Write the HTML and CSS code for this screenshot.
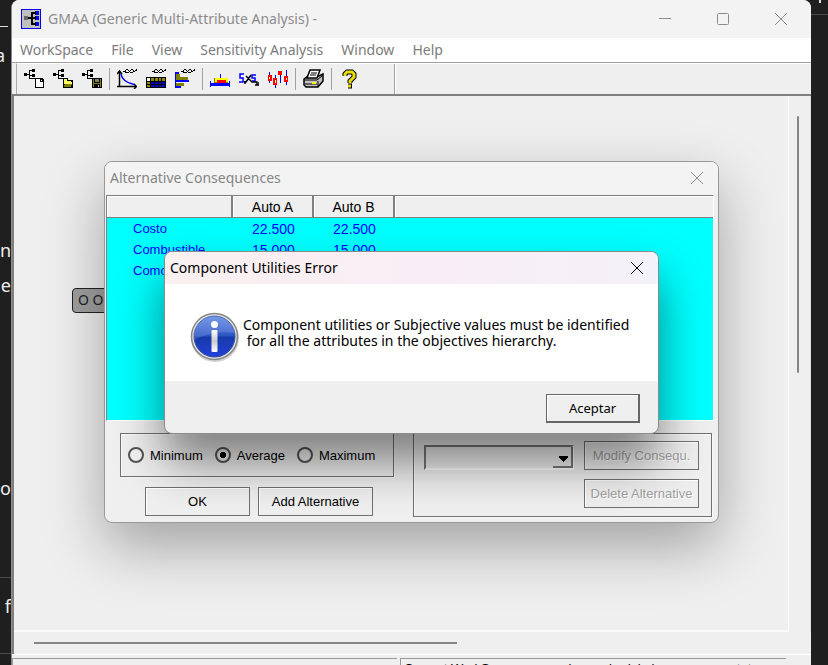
FILE: index.html
```html
<!DOCTYPE html>
<html lang="en">
<head>
<meta charset="utf-8">
<title>GMAA (Generic Multi-Attribute Analysis)</title>
<link rel="stylesheet" href="styles.css">
</head>
<body>
<div class="desktop">
  <div class="behind behind-left">
    <i class="rule rule-dash"></i>
    <span class="frag f1">a</span>
    <span class="frag f2">n</span>
    <span class="frag f3">ie</span>
    <span class="frag f4">o</span>
    <i class="rule rule-low"></i>
    <span class="frag f5">f</span>
    <i class="rule rule-end"></i>
  </div>
  <div class="behind behind-right"><i class="stub"></i><i class="rule rule-top"></i></div>

  <main class="app">
    <header class="titlebar">
      <svg class="logo" width="20" height="20" viewBox="0 0 20 20" shape-rendering="crispEdges">
        <path fill="#0000f0" d="M0 0h20v20H0z"/>
        <path fill="#c0c0c0" d="M1 1h18v18H1z"/>
        <path fill="#666" d="M3 7h4v4H3z"/>
        <path d="M7 8h4v2H7zM10 3h2v13h-2zM12 3h2v2h-2zM12 8h2v2h-2zM12 14h2v2h-2z"/>
        <path fill="#0000f0" d="M15 2h3v4h-3zM15 7h3v4h-3zM15 13h3v4h-3z"/>
        <path d="M14 2h1v4h-1zM14 7h1v4h-1zM14 13h1v4h-1z"/>
      </svg>
      <h1>GMAA (Generic Multi-Attribute Analysis) -</h1>
      <div class="winbtns">
        <button type="button" aria-label="Minimize"><svg width="14" height="14" viewBox="0 0 14 14"><path d="M1 6.500h12"/></svg></button>
        <button type="button" aria-label="Maximize"><svg width="14" height="14" viewBox="0 0 14 14"><rect x="1.500" y="1.500" width="11" height="11" rx="1"/></svg></button>
        <button type="button" aria-label="Close"><svg width="14" height="14" viewBox="0 0 14 14"><path d="M1 1l12 12M13 1L1 13"/></svg></button>
      </div>
    </header>
    <nav class="menu">
      <a href="#">WorkSpace</a><a href="#">File</a><a href="#">View</a><a href="#">Sensitivity Analysis</a><a href="#">Window</a><a href="#">Help</a>
    </nav>
    <svg class="defs" width="0" height="0" aria-hidden="true">
      <defs>
        <path id="tree" d="M0 4h3v3H0zM3 5h2v1H3zM5 1h1v9H5zM6 1h2v1H6zM8 0h3v3H8zM6 6h2v1H6zM8 5h3v3H8zM6 9h5v1H6z"/>
        <path id="wave" d="M6 2h2V1h1v3H8V3H6zM9 0h2v1H9zM11 1h1v1h-1zM9 3h3v1H9zM12 2h1v1h-1zM13 1h1v1h-1zM14 0h2v1h-2zM13 3h1v1h-1zM14 3h2v1h-2zM16 1h1v2h-1zM17 2h1v1h-1zM18 1h1v1h-1zM19 0h1v2h-1z"/>
      </defs>
    </svg>
    <div class="toolbar">
      <div class="group">
        <button type="button" aria-label="New workspace"><svg width="20" height="20" viewBox="0 0 20 20" shape-rendering="crispEdges"><use href="#tree"/><path d="M11 9h7l2 2v8h-9z"/><path fill="#fff" d="M12 10h4v3h3v5h-7zM17 11h1v1h-1z"/></svg></button>
        <button type="button" aria-label="Open workspace"><svg width="20" height="20" viewBox="0 0 20 20" shape-rendering="crispEdges"><use href="#tree"/><path d="M10 9h5v2h5v8H10z"/><path fill="#ffff60" d="M11 10h3v2h4v1h-7z"/><path fill="#808000" d="M12 15h7l-1 3h-7z"/><path fill="#ffff60" d="M11 13h8v2h-8z"/></svg></button>
        <button type="button" aria-label="Save workspace"><svg width="20" height="20" viewBox="0 0 20 20" shape-rendering="crispEdges"><use href="#tree"/><path d="M10 9h10v10H10z"/><path fill="#808000" d="M11 10h1v8h-1zM18 10h1v8h-1zM11 14h8v1h-8z"/><path fill="#808060" d="M13 10h4v3h-4z"/><path fill="#c0c0c0" d="M16 16h1v2h-1z"/></svg></button>
      </div>
      <div class="group">
        <button type="button" aria-label="Utilities"><svg width="20" height="20" viewBox="0 0 20 20"><use href="#wave"/><path fill="none" stroke="#000" stroke-width="1.500" d="M2.500 18V3M0 17.500h20M0 5l2.500-3L5 5M17 15l2.500 2.500L17 20"/><path fill="none" stroke="#00f" stroke-width="1.500" d="M4 5c1 6 6 9 13 10.500"/></svg></button>
        <button type="button" aria-label="Consequence table"><svg width="20" height="20" viewBox="0 0 20 20" shape-rendering="crispEdges"><use href="#wave"/><path d="M0 8h20v11H0z"/><path fill="#fff" d="M1 9h3v3H1z"/><path fill="#908800" d="M5 9h3v3H5zM9 9h3v3H9zM13 9h2v3h-2zM16 9h3v3h-3zM1 13h3v2H1zM1 16h3v2H1z"/><path fill="#0000c8" d="M5 13h3v2H5zM9 13h3v2H9zM13 13h2v2h-2zM16 13h3v2h-3zM5 16h3v2H5zM9 16h3v2H9zM13 16h2v2h-2zM16 16h3v2h-3z"/></svg></button>
        <button type="button" aria-label="Ranking"><svg width="20" height="20" viewBox="0 0 20 20" shape-rendering="crispEdges"><use href="#wave"/><path fill="#808000" d="M1 5h4v3H1zM1 8h12v3H1zM1 14h8v3H1z"/><path fill="#00f" d="M0 3h1v16H0zM1 3h3v2H1zM1 11h13v2H1zM1 17h5v2H1z"/></svg></button>
      </div>
      <div class="group">
        <button type="button" aria-label="Weight stability"><svg width="20" height="20" viewBox="0 0 20 20" shape-rendering="crispEdges"><path fill="#00f" d="M10 5h1v5h-1zM0 12h1v6H0zM19 12h1v6h-1zM0 14h20v3H0z"/><path fill="#808000" d="M4 9h14v5H4z"/><path fill="#ff0" d="M5 9h13v4H5z"/><path fill="#f00" d="M7 11h9v3H7z"/></svg></button>
        <button type="button" aria-label="Dominance"><svg width="20" height="20" viewBox="0 0 20 20"><path fill="none" stroke="#00f" stroke-width="1.500" d="M5 5H1v4h3v4H0M17 6h-4v3h3v3h-3"/><path fill="none" stroke="#000" stroke-width="1.500" d="M5 13h2l5-7M7 7l6 6h5v3M6 15v-3M16 16h4v-3"/></svg></button>
        <button type="button" aria-label="Simulation"><svg width="20" height="20" viewBox="0 0 20 20" shape-rendering="crispEdges"><path fill="#00f" d="M1 3h1v11H1zM7 6h1v13H7zM12 3h1v11h-1zM18 1h1v15h-1z"/><path fill="#f00" d="M0 6h4v6H0zM5 9h4v7H5zM10 2h4v4h-4zM16 7h4v6h-4z"/><path fill="#ff9" d="M1 8h1v2H1zM7 11h1v3H7zM18 9h1v2h-1z"/></svg></button>
      </div>
      <div class="group">
        <button type="button" aria-label="Print"><svg width="21" height="20" viewBox="0 0 21 20"><path fill="#c0c0c0" stroke="#000" stroke-width="1.500" d="M1 10l4-3h11l4-2v7l-5 6H3l-2-2z"/><path fill="#fff" stroke="#000" stroke-width="1.500" d="M4 9l3-8h10l-3 8z"/><path fill="none" stroke="#000" d="M8 4h6M7 6h6M1 11h13l5-4M15 18v-6M2 15h12"/><path fill="#ff0" d="M9 13h4v2H9z"/></svg></button>
      </div>
      <div class="group last">
        <button type="button" aria-label="Help"><svg width="20" height="20" viewBox="0 0 20 20"><path fill="none" stroke="#000" stroke-width="5" d="M4 7V5l2-2h5l2 2v3l-4 4v2M7 17h4"/><path fill="none" stroke="#e8dc00" stroke-width="3" d="M4 7V5l2-2h5l2 2v3l-4 4v2M7 17h3"/></svg></button>
      </div>
    </div>

    <section class="client">
      <div class="canvas"><div class="node">O O</div></div>
      <div class="vscroll"><i></i></div>
      <div class="hscroll"><i></i></div>
    </section>
    <footer class="status"><span></span><span>Current WorkSpace: comparison schedule has no name state</span></footer>
  </main>

  <section class="dialog consequences">
    <header class="dlg-title"><h2>Alternative Consequences</h2>
      <button type="button" aria-label="Close"><svg width="14" height="14" viewBox="0 0 14 14"><path d="M1 1l12 12M13 1L1 13"/></svg></button>
    </header>
    <div class="grid">
      <table>
        <colgroup><col class="c-name"><col class="c-val"><col class="c-val"><col></colgroup>
        <thead><tr><th></th><th>Auto A</th><th>Auto B</th><th></th></tr></thead>
        <tbody>
          <tr><td>Costo</td><td>22.500</td><td>22.500</td><td></td></tr>
          <tr><td>Combustible</td><td>15.000</td><td>15.000</td><td></td></tr>
          <tr><td>Comodidad</td><td></td><td></td><td></td></tr>
        </tbody>
      </table>
    </div>
    <div class="controls">
      <div class="left">
        <div class="box radios">
          <label><input type="radio" name="level">Minimum</label>
          <label><input type="radio" name="level" checked>Average</label>
          <label><input type="radio" name="level">Maximum</label>
        </div>
        <div class="actions">
          <button type="button" class="btn ok">OK</button>
          <button type="button" class="btn">Add Alternative</button>
        </div>
      </div>
      <div class="box edit">
        <div class="combo">
          <select aria-label="Alternative"><option></option></select>
          <svg width="20" height="21" viewBox="0 0 20 21"><path fill="#f0f0f0" d="M0 0h20v21H0z"/><path fill="#777" d="M18 0h2v21H0v-2h18z"/><path d="M6 9h9v2h-1v1h-1v1h-1v1h-1v1h-1v-1H9v-1H8v-1H7v-1H6z"/></svg>
        </div>
        <div class="stack">
          <button type="button" class="btn" disabled>Modify Consequ.</button>
          <button type="button" class="btn" disabled>Delete Alternative</button>
        </div>
      </div>
    </div>
  </section>

  <section class="dialog error" role="alertdialog">
    <header class="dlg-title"><h2>Component Utilities Error</h2>
      <button type="button" aria-label="Close"><svg width="14" height="14" viewBox="0 0 14 14"><path d="M1 1l12 12M13 1L1 13"/></svg></button>
    </header>
    <div class="message">
      <svg width="50" height="50" viewBox="0 0 50 50">
        <defs>
          <linearGradient id="blue" x1="0" y1="0" x2="0" y2="1"><stop offset="0" stop-color="#5f8ae6"/><stop offset=".48" stop-color="#2c55c4"/><stop offset=".52" stop-color="#163aa8"/><stop offset="1" stop-color="#2440dc"/></linearGradient>
          <linearGradient id="silver" x1="0" y1="0" x2="0" y2="1"><stop offset="0" stop-color="#fff"/><stop offset=".5" stop-color="#ccc"/><stop offset="1" stop-color="#fff"/></linearGradient>
        </defs>
        <circle cx="25" cy="26" r="24" fill="#000" opacity=".18"/>
        <circle cx="24.500" cy="24.500" r="23" fill="#e4e4e4" stroke="#858585" stroke-width="1.500"/>
        <circle cx="24.500" cy="24.500" r="20.500" fill="url(#blue)" stroke="#29499b"/>
        <path fill="#fff" opacity=".14" d="M4 24a20.500 20.500 0 0 1 41-3C33 19 17 21 4 28z"/>
        <circle cx="24.500" cy="12.500" r="3.500" fill="#fff"/>
        <rect x="21.500" y="18" width="6" height="22" rx="1" fill="url(#silver)"/>
      </svg>
      <p>Component utilities or Subjective values must be identified<br>&nbsp;for all the attributes in the objectives hierarchy.</p>
    </div>
    <div class="foot"><button type="button" class="accept">Aceptar</button></div>
  </section>
</div>
</body>
</html>
```
FILE: styles.css
```css
* { box-sizing: border-box; }
html, body { height: 100%; margin: 0; overflow: hidden; }
body { background: #1f1f1f; font-family: "Liberation Sans", sans-serif; font-size: 13px; color: #000; }
button { font: inherit; padding: 0; border: 0; background: none; color: inherit; }
h1, h2, p { margin: 0; font-weight: normal; }
svg { display: block; }
.defs { position: absolute; }

.desktop { position: relative; height: 100%; overflow: hidden; }

/* windows partly covered by the application */
.behind { position: absolute; top: 0; bottom: 0; overflow: hidden; }
.behind-left { left: 0; width: 11px; }
.behind-right { right: 0; width: 17px; }
.frag { position: absolute; right: 0; color: #eee; font: 18px/20px "Noto Sans", sans-serif; }
.f1 { top: 45px; right: 6px; }
.f2 { top: 240px; }
.f3 { top: 275px; }
.f4 { top: 478px; }
.f5 { top: 596px; }
.rule { position: absolute; left: 0; right: 0; height: 1px; background: #4a4a4a; }
.rule-dash { top: 26px; right: 3px; background: #ddd; }
.rule-low { top: 577px; }
.rule-end { top: 653px; }
.rule-top { top: 14px; }
.stub { position: absolute; left: 8px; top: 0; width: 2px; height: 3px; background: #dde; }

.app {
  position: absolute; left: 11px; right: 17px; top: 0; bottom: 0;
  display: flex; flex-direction: column;
  background: #efefef; border-left: 1px solid #8a8a8a; border-radius: 8px 8px 0 0; overflow: hidden;
}
.titlebar { display: flex; align-items: center; height: 38px; flex: none; padding: 0 1px 0 9px; background: #f3f3f3; }
.titlebar h1 { flex: 1; margin-left: 7px; color: #8c8c8c; font: 14px/20px "Noto Sans", sans-serif; white-space: nowrap; }
.winbtns { display: flex; }
.winbtns button { width: 58px; display: grid; place-items: center; }
.winbtns svg, .dlg-title svg { fill: none; stroke: #8c8c8c; stroke-width: 1; }

.menu { display: flex; height: 25px; flex: none; align-items: center; gap: 18px; padding-left: 8px; background: #fff; border-bottom: 1px solid #a0a0a0; }
.menu a { color: #7c7c7c; text-decoration: none; font: 14px/20px "Noto Sans", sans-serif; white-space: nowrap; }

.toolbar { display: flex; flex: none; align-items: center; height: 31px; margin-left: 4px; border-top: 1px solid #fff; border-left: 1px solid #aaa; }
.group { display: flex; align-items: center; gap: 9px; height: 22px; padding: 0 7px; border-right: 1px solid #a0a0a0; }
.group.last { height: 30px; padding: 0 33px 0 9px; box-shadow: 1px 0 #fff; }

.client {
  flex: 1; min-height: 0; display: grid; grid-template: 1fr 22px / 1fr 22px;
  border: solid #808080; border-width: 2px 0 0 2px;
}
.canvas { border-right: 1px solid #fff; border-bottom: 2px solid #fafafa; padding: 192px 0 0 58px; }
.node {
  width: 90px; height: 25px; padding-left: 5px; border: 1px solid #222; border-radius: 4px;
  background: #a0a0a0; color: #222; font: 14px/22px "Noto Sans", sans-serif;
}
.vscroll { display: flex; justify-content: center; padding: 20px 3px 0 0; border-right: 1px solid #ddd; }
.vscroll i { width: 2px; height: 257px; background: #858585; border-radius: 1px; }
.hscroll { display: flex; align-items: center; padding-left: 20px; }
.hscroll i { width: 56%; height: 2px; background: #858585; }
.status { display: grid; grid-template-columns: 385px 1fr; gap: 3px; flex: none; height: 11px; padding: 3px 25px 0 0; border-top: 1px solid #fff; overflow: hidden; }
.status span { border: solid #999; border-width: 1px 0 0 1px; padding: 2px 0 0 3px; height: 20px; font-size: 13px; white-space: nowrap; overflow: hidden; }

.dialog { position: absolute; display: flex; flex-direction: column; border: 1px solid #999; border-radius: 8px; overflow: hidden; background: #efefef; }
.dlg-title { display: flex; flex: none; align-items: center; justify-content: space-between; height: 32px; padding: 0 14px 0 5px; background: #f3f3f3; }
.dlg-title h2 { font: 14px/20px "Noto Sans", sans-serif; }

.consequences { left: 104px; top: 161px; width: 615px; box-shadow: 0 24px 60px rgba(0, 0, 0, .32); }
.consequences h2 { color: #858585; }
.grid { height: 226px; margin: 1px 4px 0 1px; border: 1px solid #808080; border-right-color: #fff; border-bottom-color: #fff; background: #0ff; }
table { width: 100%; table-layout: fixed; border-collapse: separate; border-spacing: 0; }
.c-name { width: 126px; }
.c-val { width: 81px; }
th { height: 22px; padding: 0; border: solid #808080; border-width: 0 2px 1px 0; background: #efefef; box-shadow: inset 1px 1px #fff; font-weight: normal; font-size: 14px; }
th:last-child { border-right: 0; }
td { height: 21px; padding: 0; color: #00f; text-align: center; font-size: 14px; line-height: 20px; }
td:first-child { padding-left: 26px; text-align: left; font-size: 13px; }

.controls { display: flex; justify-content: space-between; align-items: flex-start; padding: 12px 6px 5px 15px; }
.box { border: 1px solid #707070; box-shadow: inset 1px 1px rgba(255, 255, 255, .6), 1px 1px rgba(255, 255, 255, .5); }
.radios { display: flex; align-items: center; gap: 12px; width: 274px; height: 44px; padding-left: 7px; }
.radios label { display: flex; align-items: center; gap: 6px; }
.radios input {
  appearance: none; width: 16px; height: 16px; margin: 0; border: 2px solid #555; border-radius: 50%; background: #f4f4f4;
}
.radios input:checked { background: radial-gradient(circle, #000 0 3px, #f4f4f4 3px); }
.actions { display: flex; gap: 8px; padding: 10px 0 0 25px; }
.btn { width: 115px; height: 29px; border: 1px solid #707070; background: #efefef; box-shadow: inset 1px 1px #fff; white-space: nowrap; }
.btn.ok { width: 105px; }
.btn:disabled { color: #a0a0a0; text-shadow: 1px 1px #fff; }
.edit { display: flex; align-items: flex-start; gap: 10px; width: 299px; height: 84px; padding: 7px 0 0 10px; }
.combo { position: relative; width: 150px; margin-top: 4px; }
.combo select { appearance: none; display: block; width: 100%; height: 25px; border: 2px solid #777; border-right-color: #fff; border-bottom-color: #fff; border-radius: 0; background: #efefef; }
.combo svg { position: absolute; right: 1px; top: 2px; pointer-events: none; }
.stack { display: grid; gap: 9px; }

.error { left: 164px; top: 251px; width: 495px; border-color: #8a8a8a; box-shadow: 0 28px 48px rgba(0, 0, 0, .48); }
.error .dlg-title { background: linear-gradient(90deg, #f9f0f0, #f9eef5 55%, #f3f1f9); }
.error .dlg-title svg { stroke: #000; }
.message { display: flex; align-items: flex-start; gap: 3px; height: 97px; padding: 28px 0 0 25px; background: #fff; }
.message p { padding-top: 5px; font: 14px/16px "Noto Sans", sans-serif; white-space: nowrap; }
.foot { display: flex; justify-content: flex-end; padding: 13px 18px 10px; }
.accept { width: 94px; height: 29px; border: solid #666; border-width: 1px 2px 2px 1px; background: #efefef; box-shadow: inset 1px 1px #fff; font: 13px/16px "Noto Sans", sans-serif; }
```
